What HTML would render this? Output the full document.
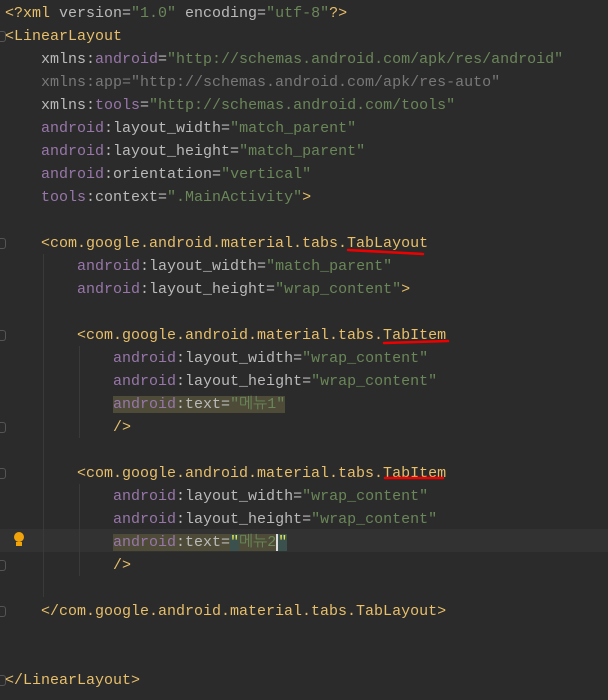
<!DOCTYPE html>
<html><head><meta charset="utf-8"><style>
html,body{margin:0;padding:0;background:#2b2b2b;width:608px;height:700px;overflow:hidden}
#ed{position:relative;font-family:"Liberation Mono","NanumGothic",monospace;font-size:15px;color:#bababa}
.l{position:absolute;left:5px;height:23px;line-height:23px;white-space:pre;margin-top:2px}
.t{color:#e8bf6a}.n{color:#9876aa}.v{color:#6a8759}.d{color:#787878}
.hl{background:#4e4c38}
.g{position:absolute;width:1px;background:#3a3a3a}
.f{position:absolute;left:0;width:5px;height:9px;border:1px solid #555;border-left:none;border-radius:0 3px 3px 0}
</style></head><body><div id="ed">
<div style="position:absolute;left:0;top:529px;width:608px;height:23px;background:#323232"></div>
<div class="g" style="left:43px;top:254px;height:343px"></div>
<div class="g" style="left:79px;top:346px;height:92px"></div>
<div class="g" style="left:79px;top:484px;height:92px"></div>
<div class="f" style="top:31px"></div>
<div class="f" style="top:238px"></div>
<div class="f" style="top:330px"></div>
<div class="f" style="top:422px"></div>
<div class="f" style="top:468px"></div>
<div class="f" style="top:560px"></div>
<div class="f" style="top:606px"></div>
<div class="f" style="top:675px"></div>
<div class="l" style="top:0"><span class="t">&lt;?xml </span>version=<span class="v">"1.0"</span> encoding=<span class="v">"utf-8"</span><span class="t">?&gt;</span></div>
<div class="l t" style="top:23px">&lt;LinearLayout</div>
<div class="l" style="top:46px">    xmlns:<span class="n">android</span>=<span class="v">"http://schemas.android.com/apk/res/android"</span></div>
<div class="l d" style="top:69px">    xmlns:app="http://schemas.android.com/apk/res-auto"</div>
<div class="l" style="top:92px">    xmlns:<span class="n">tools</span>=<span class="v">"http://schemas.android.com/tools"</span></div>
<div class="l" style="top:115px">    <span class="n">android</span>:layout_width=<span class="v">"match_parent"</span></div>
<div class="l" style="top:138px">    <span class="n">android</span>:layout_height=<span class="v">"match_parent"</span></div>
<div class="l" style="top:161px">    <span class="n">android</span>:orientation=<span class="v">"vertical"</span></div>
<div class="l" style="top:184px">    <span class="n">tools</span>:context=<span class="v">".MainActivity"</span><span class="t">&gt;</span></div>
<div class="l t" style="top:230px">    &lt;com.google.android.material.tabs.TabLayout</div>
<div class="l" style="top:253px">        <span class="n">android</span>:layout_width=<span class="v">"match_parent"</span></div>
<div class="l" style="top:276px">        <span class="n">android</span>:layout_height=<span class="v">"wrap_content"</span><span class="t">&gt;</span></div>
<div class="l t" style="top:322px">        &lt;com.google.android.material.tabs.TabItem</div>
<div class="l" style="top:345px">            <span class="n">android</span>:layout_width=<span class="v">"wrap_content"</span></div>
<div class="l" style="top:368px">            <span class="n">android</span>:layout_height=<span class="v">"wrap_content"</span></div>
<div class="l" style="top:391px">            <span class="hl"><span class="n">android</span>:text=<span class="v">"메뉴1"</span></span></div>
<div class="l t" style="top:414px">            /&gt;</div>
<div class="l t" style="top:460px">        &lt;com.google.android.material.tabs.TabItem</div>
<div class="l" style="top:483px">            <span class="n">android</span>:layout_width=<span class="v">"wrap_content"</span></div>
<div class="l" style="top:506px">            <span class="n">android</span>:layout_height=<span class="v">"wrap_content"</span></div>
<div class="l" style="top:529px">            <span class="hl"><span class="n">android</span>:text=<span class="v"><span style="background:#3b514d;color:#e8e84a">"</span>메뉴2<span style="border-left:2px solid #ddd;background:#3b514d;color:#e8e84a">"</span></span></span></div>
<div class="l t" style="top:552px">            /&gt;</div>
<div class="l t" style="top:598px">    &lt;/com.google.android.material.tabs.TabLayout&gt;</div>
<div class="l t" style="top:667px">&lt;/LinearLayout&gt;</div>
<svg style="position:absolute;left:0;top:0" width="608" height="700">
<path d="M348 250 Q385 252 423 254" stroke="#e00" stroke-width="2.5" fill="none" stroke-linecap="round"/>
<path d="M384 343 Q415 342 448 341" stroke="#e00" stroke-width="2.5" fill="none" stroke-linecap="round"/>
<path d="M385 478 Q414 478 443 478" stroke="#e00" stroke-width="2.5" fill="none" stroke-linecap="round"/>
<circle cx="19" cy="537" r="5" fill="#f0a30a"/><rect x="16" y="542" width="6" height="4" fill="#f0a30a"/>
</svg>
</div></body></html>
